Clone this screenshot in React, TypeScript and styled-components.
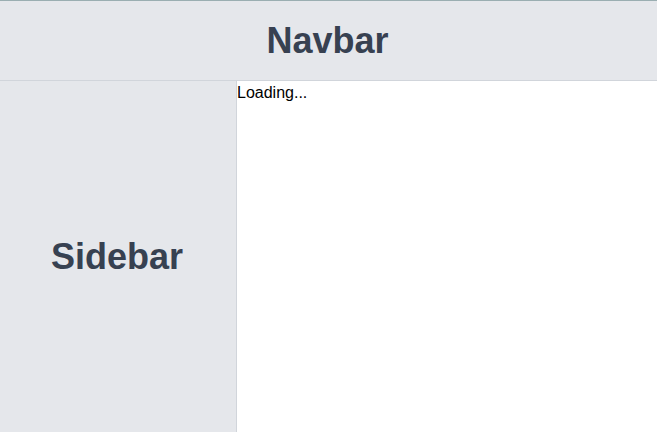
import React from "react";
import styled, { createGlobalStyle } from "styled-components";

const Global = createGlobalStyle`
  html, body { margin: 0; padding: 0; background: #fff; }
  body { font-family: "Liberation Sans", Arial, sans-serif; }
  * { box-sizing: border-box; }
`;

const Page = styled.div`
  display: flex;
  flex-direction: column;
  height: 432px;
  width: 657px;
`;

const Navbar = styled.header`
  height: 81px;
  flex: none;
  display: flex;
  align-items: center;
  justify-content: center;
  padding-right: 2px;
  background: #e5e7eb;
  border-top: 1px solid #9aaeb1;
  border-bottom: 1px solid #d1d5db;
`;

const Title = styled.h1`
  margin: 0;
  font-size: 36px;
  font-weight: 700;
  color: #374151;
`;

const Body = styled.div`
  flex: 1;
  display: flex;
  min-height: 0;
`;

const Sidebar = styled.aside`
  width: 237px;
  flex: none;
  display: flex;
  align-items: center;
  justify-content: center;
  padding-right: 2px;
  background: #e5e7eb;
  border-right: 1px solid #d1d5db;
`;

const Main = styled.main`
  flex: 1;
  font-size: 16px;
  color: #000;
  padding-top: 3px;
`;

export default function App() {
  return (
    <>
      <Global />
      <Page>
        <Navbar>
          <Title>Navbar</Title>
        </Navbar>
        <Body>
          <Sidebar>
            <Title>Sidebar</Title>
          </Sidebar>
          <Main>Loading...</Main>
        </Body>
      </Page>
    </>
  );
}
